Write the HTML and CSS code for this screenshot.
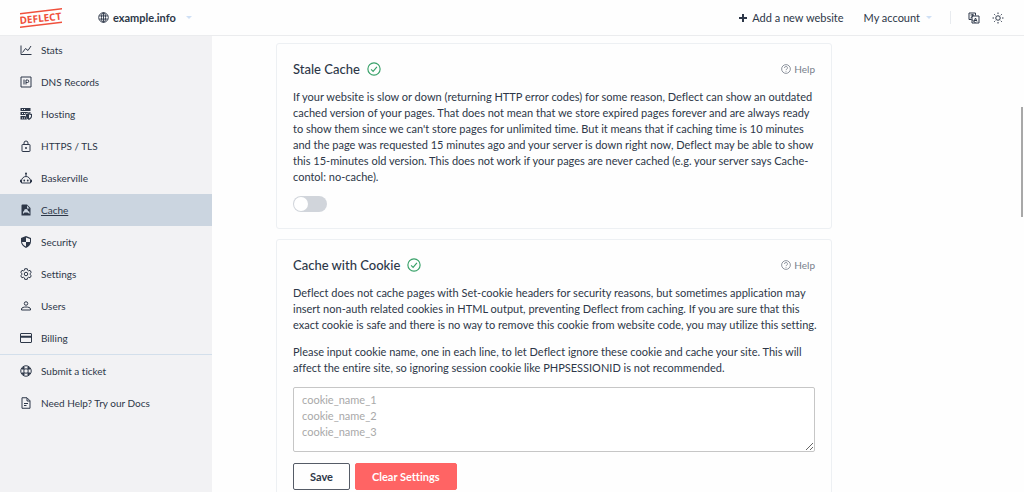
FILE: index.html
```html
<!DOCTYPE html>
<html lang="en">
<head>
    <meta charset="UTF-8">
    <meta name="viewport" content="width=device-width, initial-scale=1.0">
    <title>Deflect - Cache</title>
    <link rel="stylesheet" href="styles.css">
</head>
<body>

<header class="header">
    <a class="logo" href="#" aria-label="Deflect home">
        <svg width="44" height="22" viewBox="0 0 44 22">
            <path d="M0 6 42 1v1.500L0 7.500zM0 19.600 42 14.600v1.500L0 21.100z" fill="#f0503c"/>
            <text class="logo-text" x="0" y="17" transform="rotate(-6 0 17)">DEFLECT</text>
        </svg>
    </a>
    <button class="site">
        <svg class="globe" viewBox="0 0 24 24"><circle cx="12" cy="12" r="10.500"/><ellipse cx="12" cy="12" rx="4.500" ry="10.500"/><path d="M12 2v20M2.500 8.500h19M2.500 15.500h19"/></svg>
        example.info
        <span class="caret"></span>
    </button>
    <nav class="header-nav">
        <a class="add" href="#">
            <svg class="plus" viewBox="0 0 10 10"><path d="M5 1v8M1 5h8"/></svg>
            Add a new website
        </a>
        <button class="account">My account <span class="caret"></span></button>
        <div class="tools">
            <button class="tool" aria-label="Language">
                <svg class="icon" viewBox="0 0 24 24"><path d="M15 7V2H2v13h5M8 8h14v14H8zM15 22l-7-7M5 6h7M8.500 4v2M5 12c3-1 4-3 5-6M12 19l3-7 3 7M13 17h4"/></svg>
            </button>
            <button class="tool" aria-label="Theme">
                <svg class="icon" viewBox="0 0 24 24"><circle cx="12" cy="12" r="4.500"/><path d="M12 1v3M12 20v3M1 12h3M20 12h3M4.500 4.500l2 2M17.500 17.500l2 2M4.500 19.500l2-2M17.500 6.500l2-2"/></svg>
            </button>
        </div>
    </nav>
</header>

<div class="layout">
    <nav class="sidebar">
        <a class="item" href="#">
            <svg class="icon" viewBox="0 0 24 24"><path d="M2 3v18h21M5 17l6-8 5 4 6-9"/></svg>
            Stats
        </a>
        <a class="item" href="#">
            <svg class="icon" viewBox="0 0 24 24"><path d="M2 2h20v20H2zM8 7v10M12 17V8h3a2.500 2.500 0 0 1 0 5h-3"/></svg>
            DNS Records
        </a>
        <a class="item" href="#">
            <svg class="icon solid" viewBox="0 0 24 24"><path fill-rule="evenodd" d="M1 0h20v6H1zM4 2v2h2V2zM8 2v2h2V2zM1 8h20v2l-4-1-6 2v3H1zM4 10v2h2v-2zM8 10v2h2v-2zM1 16h10l3 7H1zM4 19v2h2v-2zM8 19v2h2v-2z"/><path fill-rule="evenodd" d="M18 10l6 2v5c0 3-3 5-6 7-3-2-6-4-6-7v-5zM18 13v8c2-1 4-3 4-5v-2z"/></svg>
            Hosting
        </a>
        <a class="item" href="#">
            <svg class="icon" viewBox="0 0 24 24"><rect x="4" y="9" width="16" height="14" rx="1"/><path d="M8 9V6a4 4 0 0 1 8 0v3"/><circle class="dot" cx="12" cy="16" r="2"/></svg>
            HTTPS / TLS
        </a>
        <a class="item" href="#">
            <svg class="icon" viewBox="0 0 24 24"><path d="M12 8V3M3 18a9 9 0 0 1 18 0v4H3zM3 16H1v4h2M21 16h2v4h-2"/><circle class="dot" cx="12" cy="3" r="2"/><circle class="dot" cx="8.500" cy="17" r="1.800"/><circle class="dot" cx="15.500" cy="17" r="1.800"/></svg>
            Baskerville
        </a>
        <a class="item active" href="#">
            <svg class="icon solid" viewBox="0 0 24 24"><path fill-rule="evenodd" d="M5 1h9l7 7v15H3V3a2 2 0 0 1 2-2zM14 3v6h5zM6 20v-3a3 3 0 0 1 2-3 4 4 0 0 1 8 0 3 3 0 0 1 3 3v3l-4-3H9z"/></svg>
            Cache
        </a>
        <a class="item" href="#">
            <svg class="icon solid" viewBox="0 0 24 24"><path fill-rule="evenodd" d="M12 0l10 4v7c0 6-4 10-10 13C6 21 2 17 2 11V4zM12 3v9H4c1 4 4 7 8 9v-9h8V6z"/></svg>
            Security
        </a>
        <a class="item" href="#">
            <svg class="icon" viewBox="0 0 24 24"><path d="M9.500 1.500h5l.6 3 2 1.200 3-1 2.400 4.200-2.300 2v2.400l2.300 2-2.400 4.200-3-1-2 1.200-.6 3h-5l-.6-3-2-1.200-3 1L1.500 15.300l2.300-2v-2.400l-2.300-2 2.400-4.200 3 1 2-1.200z"/><circle cx="12" cy="12" r="3.500"/></svg>
            Settings
        </a>
        <a class="item" href="#">
            <svg class="icon" viewBox="0 0 24 24"><circle cx="12" cy="7" r="3.500"/><path d="M3 20v-2c0-3 5-4 9-4s9 1 9 4v2z"/></svg>
            Users
        </a>
        <a class="item" href="#">
            <svg class="icon" viewBox="0 0 24 24"><rect x="1" y="3" width="22" height="18" rx="1"/><path class="stripe" d="M2 9.500h20"/></svg>
            Billing
        </a>
        <div class="support">
            <a class="item" href="#">
                <svg class="icon" viewBox="0 0 24 24"><circle cx="12" cy="12" r="10.500"/><circle cx="12" cy="12" r="4.500"/><path class="ring" d="M5 9a8 8 0 0 1 4-4M15 5a8 8 0 0 1 4 4M19 15a8 8 0 0 1-4 4M9 19a8 8 0 0 1-4-4"/></svg>
                Submit a ticket
            </a>
            <a class="item" href="#">
                <svg class="icon" viewBox="0 0 24 24"><path d="M4 1.500h10l6 6v15H4zM14 2v6h6M8 13h8M8 17h5"/></svg>
                Need Help? Try our Docs
            </a>
        </div>
    </nav>

    <main class="content">
        <section class="card">
            <div class="card-head">
                <h2>Stale Cache</h2>
                <svg class="check" viewBox="0 0 24 24"><circle cx="12" cy="12" r="10.500"/><path d="M7 12.500l3.500 3.500L17 8.500"/></svg>
                <a class="help" href="#">
                    <svg class="help-icon" viewBox="0 0 24 24"><circle cx="12" cy="12" r="10.500"/><path d="M8.500 9.500a3.500 3.500 0 1 1 5 3c-1 .6-1.500 1-1.500 2M12 16.500v2"/></svg>
                    Help
                </a>
            </div>
            <p>If your website is slow or down (returning HTTP error codes) for some reason, Deflect can show an outdated cached version of your pages. That does not mean that we store expired pages forever and are always ready<br>to show them since we can't store pages for unlimited time. But it means that if caching time is 10 minutes<br>and the page was requested 15 minutes ago and your server is down right now, Deflect may be able to show this 15-minutes old version. This does not work if your pages are never cached (e.g. your server says Cache-contol: no-cache).</p>
            <input class="toggle" type="checkbox" aria-label="Stale Cache">
        </section>

        <section class="card">
            <div class="card-head">
                <h2>Cache with Cookie</h2>
                <svg class="check" viewBox="0 0 24 24"><circle cx="12" cy="12" r="10.500"/><path d="M7 12.500l3.500 3.500L17 8.500"/></svg>
                <a class="help" href="#">
                    <svg class="help-icon" viewBox="0 0 24 24"><circle cx="12" cy="12" r="10.500"/><path d="M8.500 9.500a3.500 3.500 0 1 1 5 3c-1 .6-1.500 1-1.500 2M12 16.500v2"/></svg>
                    Help
                </a>
            </div>
            <p>Deflect does not cache pages with Set-cookie headers for security reasons, but sometimes application may insert non-auth related cookies in HTML output, preventing Deflect from caching. If you are sure that this<br>exact cookie is safe and there is no way to remove this cookie from website code, you may utilize this setting.</p>
            <p>Please input cookie name, one in each line, to let Deflect ignore these cookie and cache your site. This will<br>affect the entire site, so ignoring session cookie like PHPSESSIONID is not recommended.</p>
            <textarea class="cookies" rows="3" aria-label="Cookie names" placeholder="cookie_name_1&#10;cookie_name_2&#10;cookie_name_3"></textarea>
            <div class="actions">
                <button class="btn">Save</button>
                <button class="btn danger">Clear Settings</button>
            </div>
        </section>
    </main>
</div>

<div class="scroll-thumb"></div>

</body>
</html>
```
FILE: styles.css
```css
* {
    box-sizing: border-box;
}

body {
    margin: 0;
    height: 100vh;
    display: flex;
    flex-direction: column;
    overflow: hidden;
    font-family: Lato, sans-serif;
    font-size: 11px;
    line-height: 16px;
    font-variant-ligatures: none;
    color: #2d3748;
    background-color: #fefefe;
}

a {
    color: inherit;
    text-decoration: none;
}

button {
    font: inherit;
    color: inherit;
    background: none;
    border: none;
    padding: 0;
    cursor: pointer;
}

svg {
    flex: none;
    fill: none;
    stroke: currentColor;
    stroke-width: 2;
}

.header {
    display: flex;
    align-items: center;
    flex: none;
    height: 36px;
    padding: 0 20px;
    border-bottom: 1px solid #ebecee;
}

.logo {
    display: flex;
}

.logo svg {
    stroke: none;
}

.logo-text {
    font-family: "Open Sans", sans-serif;
    font-size: 10px;
    font-weight: 700;
    fill: #f0503c;
}

.site,
.account,
.add,
.header-nav,
.tools,
.tool {
    display: flex;
    align-items: center;
}

.site {
    gap: 4px;
    margin-left: 34px;
    font-weight: 700;
}

.globe {
    width: 11px;
    height: 11px;
}

.caret {
    margin-left: 6px;
    border: 3px solid transparent;
    border-top-color: #cfe0f5;
    border-bottom: none;
}

.header-nav {
    margin-left: auto;
}

.add {
    gap: 4px;
}

.plus {
    width: 10px;
    height: 10px;
}

.account {
    margin-left: 20px;
}

.tools {
    gap: 12px;
    height: 13px;
    margin-left: 18px;
    padding-left: 17px;
    border-left: 1px solid #e8ebef;
}

.icon {
    width: 12px;
    height: 12px;
}

.solid {
    fill: currentColor;
    stroke: none;
}

.dot {
    fill: currentColor;
    stroke: none;
}

.stripe,
.ring {
    stroke-width: 4;
}

.layout {
    display: flex;
    flex: 1;
    min-height: 0;
}

.sidebar {
    flex: none;
    width: 212px;
    background-color: #f2f2f4;
    font-size: 10px;
}

.item {
    display: flex;
    align-items: center;
    gap: 9px;
    height: 32px;
    padding-left: 20px;
}

.sidebar .item:first-child {
    margin-top: -2px;
}

.active {
    background-color: #cbd5e0;
    text-decoration: underline;
}

.support {
    border-top: 1px solid #d3dfeb;
}

.support .item:first-child {
    margin-top: 0;
}

.content {
    flex: 1;
    padding: 7px 192px 0 64px;
}

.card {
    padding: 17px 16px 16px;
    margin-bottom: 10px;
    border: 1px solid #edf0f3;
    border-radius: 3px;
}

.card-head {
    display: flex;
    align-items: center;
    gap: 7px;
    margin-bottom: 12px;
}

h2 {
    margin: 0;
    font-size: 13px;
    line-height: 16px;
    font-weight: 500;
}

.check {
    width: 14px;
    height: 14px;
    color: #38a169;
}

.help {
    display: flex;
    align-items: center;
    gap: 3px;
    margin-left: auto;
    font-size: 10px;
    color: #78808c;
}

.help-icon {
    width: 10px;
    height: 10px;
}

p {
    margin: 0 -8px 11px 0;
}

.toggle {
    display: flex;
    appearance: none;
    width: 34px;
    height: 16px;
    margin: 0;
    padding: 1px;
    border-radius: 8px;
    background-color: #d1d5db;
}

.toggle::before {
    content: "";
    width: 14px;
    height: 14px;
    border-radius: 50%;
    background-color: #fff;
}

.toggle:checked {
    justify-content: flex-end;
    background-color: #38a169;
}

.cookies {
    display: block;
    width: 100%;
    height: 65px;
    padding: 4px 8px;
    border: 1px solid #c6c6c6;
    border-radius: 2px;
    font: inherit;
    color: inherit;
    background-color: #fff;
    resize: vertical;
}

.cookies::placeholder {
    color: #a9a9a9;
}

.actions {
    display: flex;
    gap: 5px;
    margin-top: 11px;
}

.btn {
    height: 27px;
    padding: 0 16px;
    border: 1px solid #555b66;
    border-radius: 2px;
    font-weight: 700;
}

.danger {
    border-color: #ff6464;
    background-color: #ff6464;
    color: #fff;
}

.scroll-thumb {
    position: absolute;
    top: 107px;
    right: 1px;
    width: 2px;
    height: 110px;
    background-color: #a8a8a8;
}
```
